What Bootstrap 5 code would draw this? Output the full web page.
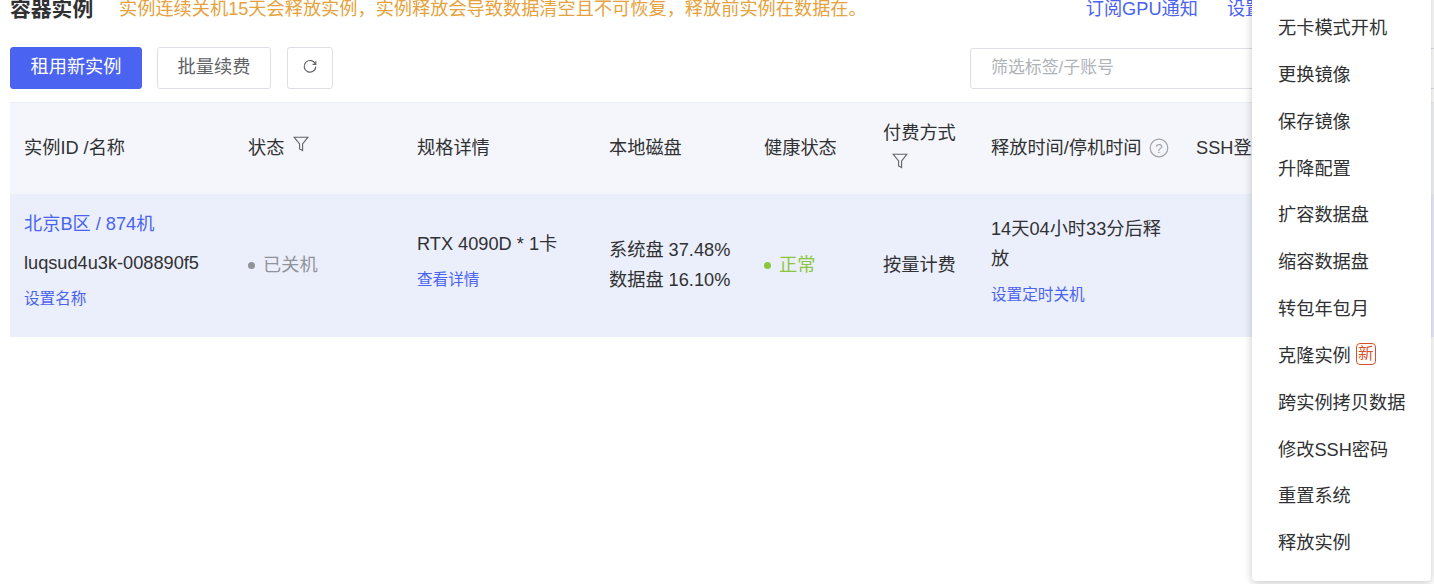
<!DOCTYPE html>
<html lang="zh-CN">
<head>
    <meta charset="UTF-8">
    <title>容器实例</title>
    <link href="https://cdn.jsdelivr.net/npm/bootstrap@5.3.0/dist/css/bootstrap.min.css" rel="stylesheet">
    <style>
        html, body {
            height: 584px;
            overflow: hidden;
        }
        body {
            font-family: "Liberation Sans", "Noto Sans CJK SC", sans-serif;
            font-size: 18.2px;
            color: #303133;
            background: #fff;
            position: relative;
        }
        .page-wrap {
            padding-left: 10px;
            width: 1600px;
            margin-top: -7px;
        }
        .title-bar {
            height: 54px;
            white-space: nowrap;
        }
        .page-title {
            font-size: 20.8px;
            font-weight: 700;
            color: #303133;
            line-height: 33px;
            margin: 0;
            width: 109px;
        }
        .warn-text {
            color: #e6a23c;
            line-height: 33px;
        }
        .top-links {
            margin-left: 219px;
            line-height: 33px;
            color: #4a63f0;
        }
        .top-links span { margin-right: 29px; }
        .tool-bar {
            height: 42px;
            margin-bottom: 13px;
        }
        .btn-rent, .btn-rent:hover {
            background: #4a63f0;
            border-color: #4a63f0;
            color: #fff;
            width: 132px;
            height: 42px;
            font-size: 18.2px;
            border-radius: 3px;
            padding: 0;
        }
        .btn-plain, .btn-plain:hover {
            background: #fff;
            border: 1px solid #dcdfe6;
            color: #606266;
            height: 42px;
            font-size: 18.2px;
            border-radius: 3px;
            padding: 0;
        }
        .btn-renew { width: 114px; margin-left: 15px; }
        .btn-refresh { width: 46px; margin-left: 16px; }
        .btn-refresh svg {
            display: block;
            margin: 0 auto 4px;
        }
        .filter-box {
            margin-left: 637px;
            margin-top: 1px;
            width: 480px;
            height: 41px;
            border: 1px solid #dcdfe6;
            border-radius: 3px;
            padding-left: 20px;
            line-height: 37px;
            color: #b0b3b8;
            font-size: 16.9px;
        }
        .inst-table {
            table-layout: fixed;
            border-collapse: collapse;
            width: 1500px;
            margin: 0;
        }
        .inst-table th, .inst-table td {
            padding: 0 14px;
            vertical-align: middle;
            font-weight: 400;
            line-height: 30px;
        }
        .inst-table col:nth-child(1) { width: 224px; }
        .inst-table col:nth-child(2) { width: 169px; }
        .inst-table col:nth-child(3) { width: 192px; }
        .inst-table col:nth-child(4) { width: 155px; }
        .inst-table col:nth-child(5) { width: 119px; }
        .inst-table col:nth-child(6) { width: 108px; }
        .inst-table col:nth-child(7) { width: 205px; }
        .inst-table col:nth-child(8) { width: 328px; }
        .inst-table thead tr {
            height: 91px;
            background: #f5f6fb;
            border-top: 1px solid #ebeef5;
        }
        .inst-table tbody tr {
            height: 143px;
            background: #ebeffb;
        }
        .link-blue { color: #4a63f0; }
        .link-small {
            color: #4a63f0;
            font-size: 15.6px;
            line-height: 22px;
            margin-top: 10px;
            margin-bottom: 11px;
        }
        .line-gap { margin-bottom: 9px; }
        .state-off { color: #909399; }
        .state-ok { color: #8cc63f; }
        .dot {
            display: inline-block;
            width: 7px;
            height: 7px;
            border-radius: 50%;
            margin-right: 8px;
            vertical-align: 2px;
        }
        .dot-off { background: #909399; }
        .dot-ok { background: #8cc63f; }
        .filter-icon { margin-left: 4px; vertical-align: 2px; }
        .filter-under {
            display: block;
            margin: 5px 0 9px 9px;
        }
        .help-icon { margin-left: 2px; vertical-align: -4px; }
        .action-menu {
            position: absolute;
            left: 1252px;
            top: -10px;
            width: 179px;
            height: 591px;
            background: #fff;
            border-radius: 4px;
            box-shadow: 0 2px 8px rgba(0, 0, 0, .22);
            padding-top: 15px;
        }
        .menu-row {
            height: 46.85px;
            line-height: 46.85px;
            padding-left: 26px;
            color: #303133;
            white-space: nowrap;
        }
        .new-tag {
            display: inline-block;
            width: 20px;
            height: 22px;
            line-height: 19px;
            border: 1px solid #d9512c;
            border-radius: 4px;
            color: #d9512c;
            font-size: 15.6px;
            text-align: center;
            vertical-align: -3px;
            overflow: hidden;
        }
    </style>
</head>
<body>
    <div class="page-wrap">
        <div class="title-bar d-flex align-items-start">
            <h1 class="page-title">容器实例</h1>
            <span class="warn-text">实例连续关机15天会释放实例，实例释放会导致数据清空且不可恢复，释放前实例在数据在。</span>
            <div class="top-links"><span>订阅GPU通知</span><span>设置</span></div>
        </div>
        <div class="tool-bar d-flex">
            <button class="btn btn-rent">租用新实例</button>
            <button class="btn btn-plain btn-renew">批量续费</button>
            <button class="btn btn-plain btn-refresh">
                <svg width="16" height="16" viewBox="0 0 16 16" fill="none" stroke="#606266" stroke-width="1.2"><path d="M13.4 6.2A5.8 5.8 0 1 0 13.8 8.6"/><path d="M10.6 6.4h3.2V3.2" stroke-width="1.1"/></svg>
            </button>
            <div class="filter-box">筛选标签/子账号</div>
        </div>
        <table class="inst-table">
            <colgroup>
                <col><col><col><col><col><col><col><col>
            </colgroup>
            <thead>
                <tr>
                    <th>实例ID /名称</th>
                    <th>状态
                        <svg class="filter-icon" width="16" height="16" viewBox="0 0 16 16" fill="none" stroke="#606266" stroke-width="1.1"><path d="M1 1.2h14L9.6 8v6.6L6.6 13V8z"/></svg>
                    </th>
                    <th>规格详情</th>
                    <th>本地磁盘</th>
                    <th>健康状态</th>
                    <th>付费方式
                        <svg class="filter-under" width="16" height="16" viewBox="0 0 16 16" fill="none" stroke="#606266" stroke-width="1.1"><path d="M1 1.2h14L9.6 8v6.6L6.6 13V8z"/></svg>
                    </th>
                    <th class="text-nowrap">释放时间/停机时间
                        <svg class="help-icon" width="20" height="20" viewBox="0 0 20 20" fill="none"><circle cx="10" cy="10" r="8.8" stroke="#a0a3a8" stroke-width="1.2"/><text x="10" y="14.6" text-anchor="middle" font-size="13.5" fill="#a0a3a8" font-family="Liberation Sans">?</text></svg>
                    </th>
                    <th>SSH登录</th>
                </tr>
            </thead>
            <tbody>
                <tr>
                    <td>
                        <div class="link-blue line-gap">北京B区 / 874机</div>
                        <div>luqsud4u3k-008890f5</div>
                        <div class="link-small">设置名称</div>
                    </td>
                    <td class="state-off"><span class="dot dot-off"></span>已关机</td>
                    <td>
                        <div>RTX 4090D * 1卡</div>
                        <div class="link-small">查看详情</div>
                    </td>
                    <td>
                        <div>系统盘 37.48%</div>
                        <div>数据盘 16.10%</div>
                    </td>
                    <td class="state-ok"><span class="dot dot-ok"></span>正常</td>
                    <td>按量计费</td>
                    <td>
                        <div>14天04小时33分后释放</div>
                        <div class="link-small">设置定时关机</div>
                    </td>
                    <td></td>
                </tr>
            </tbody>
        </table>
    </div>
    <div class="action-menu">
        <div class="menu-row">无卡模式开机</div>
        <div class="menu-row">更换镜像</div>
        <div class="menu-row">保存镜像</div>
        <div class="menu-row">升降配置</div>
        <div class="menu-row">扩容数据盘</div>
        <div class="menu-row">缩容数据盘</div>
        <div class="menu-row">转包年包月</div>
        <div class="menu-row">克隆实例 <span class="new-tag">新</span></div>
        <div class="menu-row">跨实例拷贝数据</div>
        <div class="menu-row">修改SSH密码</div>
        <div class="menu-row">重置系统</div>
        <div class="menu-row">释放实例</div>
    </div>
    <script src="https://cdn.jsdelivr.net/npm/bootstrap@5.3.0/dist/js/bootstrap.bundle.min.js"></script>
</body>
</html>
